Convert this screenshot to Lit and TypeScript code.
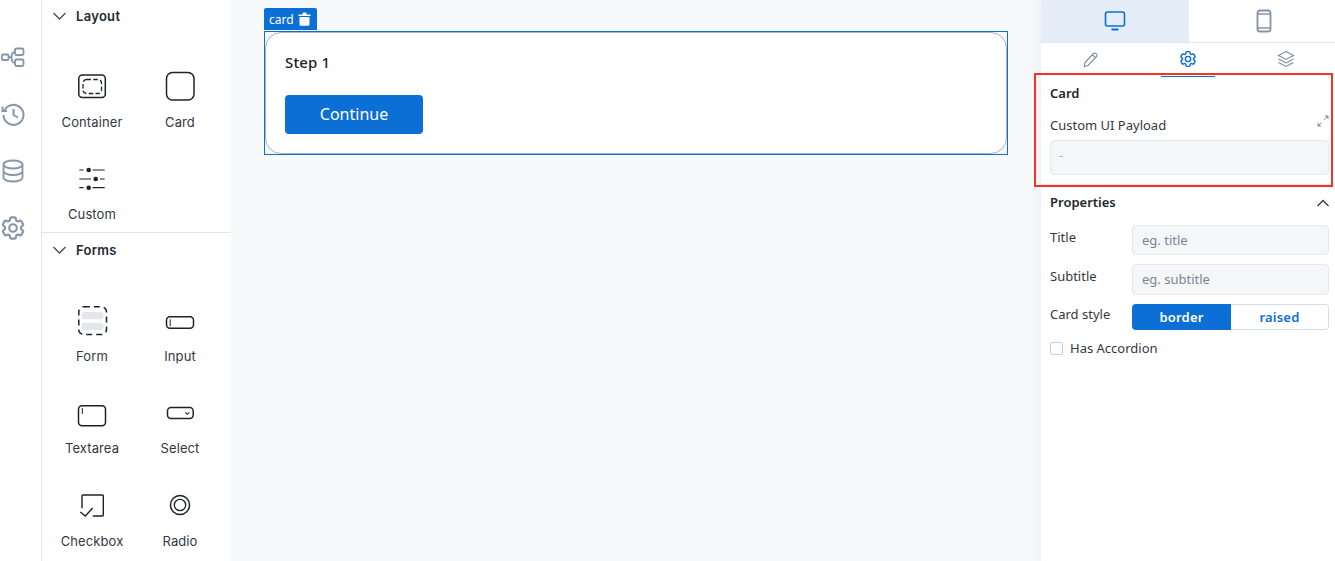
import { LitElement, html, css, svg } from "lit";
import { customElement } from "lit/decorators.js";

const GEAR = svg`<path d="M9.594 3.94c.09-.542.56-.94 1.11-.94h2.593c.55 0 1.02.398 1.11.94l.213 1.281c.063.374.313.686.645.87.074.04.147.083.22.127.324.196.72.257 1.075.124l1.217-.456a1.125 1.125 0 011.37.49l1.296 2.247a1.125 1.125 0 01-.26 1.431l-1.003.827c-.293.24-.438.613-.431.992a6.759 6.759 0 010 .255c-.007.378.138.75.43.99l1.005.828c.424.35.534.954.26 1.43l-1.298 2.247a1.125 1.125 0 01-1.369.491l-1.217-.456c-.355-.133-.75-.072-1.076.124a6.57 6.57 0 01-.22.128c-.331.183-.581.495-.644.869l-.213 1.28c-.09.543-.56.941-1.11.941h-2.594c-.55 0-1.02-.398-1.11-.94l-.213-1.281c-.062-.374-.312-.686-.644-.87a6.52 6.52 0 01-.22-.127c-.325-.196-.72-.257-1.076-.124l-1.217.456a1.125 1.125 0 01-1.369-.49l-1.297-2.247a1.125 1.125 0 01.26-1.431l1.004-.827c.292-.24.437-.613.43-.992a6.932 6.932 0 010-.255c.007-.378-.138-.75-.43-.99l-1.004-.828a1.125 1.125 0 01-.26-1.43l1.297-2.247a1.125 1.125 0 011.37-.491l1.216.456c.356.133.751.072 1.076-.124.072-.044.146-.087.22-.128.332-.183.582-.495.644-.869l.214-1.281z"/><circle cx="12" cy="12" r="3.200"/>`;

const INK = "#1f2328";
const ICONS: Record<string, unknown> = {
  Container: svg`<rect x="2.800" y="5" width="26.500" height="22.500" rx="3.500" fill="none" stroke="${INK}" stroke-width="1.500"/><rect x="7" y="9.500" width="18.500" height="14" rx="3.500" fill="none" stroke="${INK}" stroke-width="1.300" stroke-dasharray="4.500 2.300"/>`,
  Card: svg`<rect x="2.500" y="2.500" width="27.500" height="27.500" rx="6" fill="none" stroke="${INK}" stroke-width="1.500"/>`,
  Custom: svg`<g stroke="${INK}" stroke-width="1.200" fill="none"><path d="M3.300 8h4.200M16.500 8h12.200M3.300 17H15M24 17h4.700M3.300 25.700h4.200M16.500 25.700h12.200"/></g><g fill="${INK}"><circle cx="12.700" cy="8" r="2.300"/><circle cx="19.700" cy="17" r="2.300"/><circle cx="12.700" cy="25.700" r="2.300"/></g>`,
  Form: svg`<rect x="2.800" y="2.800" width="27.700" height="27.700" rx="5" fill="none" stroke="${INK}" stroke-width="1.500" stroke-dasharray="6 4"/><rect x="5.500" y="8" width="22" height="7.300" rx="3" fill="#e3e7ec"/><rect x="5.500" y="18.700" width="22" height="7.300" rx="3" fill="#e3e7ec"/>`,
  Input: svg`<rect x="2.500" y="12.800" width="27" height="11.500" rx="3.500" fill="none" stroke="${INK}" stroke-width="1.500"/><path d="M6.200 15.300v7" stroke="${INK}" stroke-width="1"/>`,
  Textarea: svg`<rect x="2.500" y="9.800" width="27" height="20" rx="3.500" fill="none" stroke="${INK}" stroke-width="1.500"/><path d="M6.300 12v6" stroke="${INK}" stroke-width="1"/>`,
  Select: svg`<rect x="3.500" y="11.500" width="25.700" height="11" rx="3.500" fill="none" stroke="${INK}" stroke-width="1.500"/><path d="M21.300 16.300l2 2 2-2" fill="none" stroke="${INK}" stroke-width="1.100"/>`,
  Checkbox: svg`<path d="M6 20.300V7.800a.8.8 0 0 1 .8-.8h19.700a.8.8 0 0 1 .8.800v19.400a.8.8 0 0 1-.8.800H16.700" fill="none" stroke="${INK}" stroke-width="1.400"/><path d="M4.300 24l5 4 7.400-8" fill="none" stroke="${INK}" stroke-width="1.400"/>`,
  Radio: svg`<circle cx="16" cy="17" r="9.500" fill="none" stroke="${INK}" stroke-width="1.500"/><circle cx="16" cy="17" r="5.700" fill="none" stroke="${INK}" stroke-width="1.300"/>`,
};

@customElement("app-root")
export class AppRoot extends LitElement {
  static styles = css`
    :host {
      display: block;
      width: 1335px;
      height: 561px;
      overflow: hidden;
      position: relative;
      font-family: "Noto Sans", sans-serif;
      color: #1f2328;
      background: #fff;
    }
    .page { display: flex; height: 561px; }

    .rail {
      width: 41px;
      flex: none;
      border-right: 1px solid #e3e6ea;
      display: flex;
      flex-direction: column;
      padding-top: 44px;
    }
    .rail svg { display: block; width: 26px; height: 26px; margin-bottom: 31px; fill: none; stroke: #8596ab; stroke-width: 1.800; }

    .palette { width: 189px; flex: none; font-family: Inter, sans-serif; overflow: hidden; }
    .sec-first { border-bottom: 1px solid #e3e6ea; height: 232px; }
    .sec-second { padding-top: 1px; }
    .sec-head {
      height: 32px;
      display: flex;
      align-items: center;
      padding-left: 11px;
      gap: 9px;
      font-size: 13px;
      font-weight: 600;
      letter-spacing: 0.3px;
      color: #262a30;
    }
    .sec-head svg { width: 14px; height: 14px; fill: none; stroke: #454c56; stroke-width: 1.300; }
    .grid {
      display: grid;
      grid-template-columns: 88px 88px;
      padding: 8px 0 0 6px;
      grid-auto-rows: 92px;
    }
    .item { display: flex; flex-direction: column; align-items: center; padding-top: 30px; box-sizing: border-box; }
    .item svg { width: 32px; height: 32px; display: block; }
    .item span { margin-top: 11px; font-size: 13px; line-height: 18px; color: #33383f; letter-spacing: 0.1px; }
    .item:nth-child(n + 5) span { margin-top: 12px; }
    .sec-first .item:nth-child(n + 5) span { margin-top: 11px; }

    .canvas {
      flex: 1;
      background: #f7f8fa;
      padding: 8px 0 0 33px;
      min-width: 0;
    }
    .tag {
      width: 53px;
      height: 22px;
      background: #0b6fd6;
      border-radius: 2px 2px 0 0;
      color: #fff;
      font-size: 12px;
      display: flex;
      align-items: center;
      gap: 4px;
      padding-left: 5px;
      box-sizing: border-box;
      margin-bottom: 1px;
    }
    .tag svg { width: 13px; height: 14px; fill: #fff; }
    .select { width: 744px; height: 124px; box-sizing: border-box; border: 1px solid #0b6fd6; }
    .card {
      height: 100%;
      box-sizing: border-box;
      border: 1px solid #a9b3c5;
      border-radius: 16px;
      background: #fff;
      padding: 18px 19px;
    }
    .card h3 { margin: 0; font-size: 15px; line-height: 22px; font-weight: 500; letter-spacing: 0.15px; color: #1c1f23; }
    .btn {
      margin-top: 22px;
      width: 138px;
      height: 39px;
      box-sizing: border-box;
      padding-bottom: 1px;
      border-radius: 4px;
      background: #0b6fd6;
      color: #fff;
      display: flex;
      align-items: center;
      justify-content: center;
      font-size: 16px;
    }

    .panel {
      width: 294px;
      flex: none;
      background: #fff;
      box-shadow: -4px 0 8px rgba(30, 40, 60, 0.03);
      position: relative;
    }
    .devices { display: grid; grid-template-columns: 148px 146px; height: 42px; border-bottom: 1px solid #e6e8ec; }
    .devices div { display: flex; align-items: center; justify-content: center; }
    .devices .on { background: #e5edf8; }
    .devices svg { width: 24px; height: 24px; fill: none; stroke-width: 1.600; }
    .devices .on svg { stroke: #0b6fd6; }
    .devices .off { padding-left: 4px; }
    .devices .off svg { stroke: #8593a5; }
    .tabs { display: grid; grid-template-columns: repeat(3, 98px); height: 33px; position: relative; }
    .tabs div { display: flex; align-items: center; justify-content: center; position: relative; padding-bottom: 1px; box-sizing: border-box; }
    .tabs svg { width: 18px; height: 18px; fill: none; stroke: #7f8a99; stroke-width: 1.100; }
    .tabs .on svg { stroke: #0b6fd6; stroke-width: 1.800; }
    .tabs .on::after {
      content: "";
      position: absolute;
      left: 22px;
      bottom: -1px;
      width: 54px;
      height: 1px;
      background: #0b6fd6;
    }
    .block { padding: 8px 6px 9px 9px; border-bottom: 1px solid #e6e8ec; }
    .title { font-size: 13px; font-weight: 600; line-height: 18px; color: #22262b; }
    .label-row { display: flex; justify-content: space-between; align-items: center; margin-top: 14px; height: 18px; }
    .label { font-size: 13px; color: #33383f; line-height: 18px; }
    .label-row svg { width: 12px; height: 12px; fill: #8a94a2; stroke: #8a94a2; stroke-width: 1; margin-top: -8px; }
    .area {
      margin-top: 6px;
      height: 35px;
      box-sizing: border-box;
      background: #f5f6f8;
      border: 1px solid #e6e8ec;
      border-radius: 4px;
      font-size: 12px;
      color: #a2aab5;
      padding: 6px 8px;
    }
    .props { padding: 0 6px 0 9px; }
    .props-head { display: flex; justify-content: space-between; align-items: center; height: 17px; margin-top: 8px; }
    .props-head svg { width: 14px; height: 14px; fill: none; stroke: #333a44; stroke-width: 1.300; }
    .row { display: grid; grid-template-columns: 82px 197px; }
    .row .label { padding-top: 3px; }
    .inp {
      box-sizing: border-box;
      background: #f5f6f8;
      border: 1px solid #e6e8ec;
      border-radius: 4px;
      font-size: 13px;
      color: #7a8594;
      padding: 0 0 1px 9px;
      display: flex;
      align-items: center;
    }
    .r1 { margin-top: 15px; }
    .r1 .inp { height: 30px; }
    .r2 { margin-top: 9px; }
    .r2 .inp { height: 31px; }
    .r3 { margin-top: 9px; }
    .r3 .label { padding-top: 1px; }
    .toggle {
      display: grid;
      grid-template-columns: 99px 98px;
      height: 26px;
      font-size: 13px;
      font-weight: 600;
      letter-spacing: 0.2px;
    }
    .toggle div { display: flex; align-items: center; justify-content: center; box-sizing: border-box; padding-bottom: 1px; }
    .toggle .a { background: #0b6fd6; color: #fff; border-radius: 4px 0 0 4px; }
    .toggle .b { color: #0b6fd6; border: 1px solid #d7dce3; border-left: none; border-radius: 0 4px 4px 0; }
    .check { display: flex; align-items: center; gap: 7px; margin-top: 9px; height: 18px; }
    .box { width: 13px; height: 13px; box-sizing: border-box; border: 1px solid #c9ced6; border-radius: 2px; background: #fff; }

    .highlight {
      position: absolute;
      left: 1034px;
      top: 73px;
      width: 299px;
      height: 114px;
      box-sizing: border-box;
      border: 2px solid #f5341f;
      pointer-events: none;
    }
  `;

  private item(name: string) {
    return html`<div class="item"><svg viewBox="0 0 32 32">${ICONS[name]}</svg><span>${name}</span></div>`;
  }

  private head(name: string) {
    return html`<div class="sec-head"><svg viewBox="0 0 14 14"><path d="M.5 4l6 6 6-6"/></svg>${name}</div>`;
  }

  render() {
    return html`
      <div class="page">
        <nav class="rail">
          <svg viewBox="0 0 26 26"><rect x="2" y="10.500" width="6.500" height="5.500" rx="1"/><rect x="15" y="4.500" width="8.500" height="6.500" rx="1.400"/><rect x="15" y="15.500" width="8.500" height="6.500" rx="1.400"/><path d="M8.500 13.200h3M15 7.800c-3 0-3.500 2-3.500 5.400s.5 5.600 3.500 5.600"/></svg>
          <svg viewBox="0 0 26 26"><path d="M4.500 9.500A10 10 0 1 1 3.500 14" stroke-width="2"/><path d="M2.500 5.500v4.500h4.500M13.500 8v6l4.500 2.500" stroke-width="2"/></svg>
          <svg viewBox="0 0 26 26"><ellipse cx="13" cy="6.500" rx="9.500" ry="4"/><path d="M3.500 6.500v13c0 2.200 4.300 4 9.500 4s9.500-1.800 9.500-4v-13M3.500 13c0 2.200 4.300 4 9.500 4s9.500-1.800 9.500-4"/></svg>
          <svg viewBox="1 1 22 22" stroke-width="1.400">${GEAR}</svg>
        </nav>
        <aside class="palette">
          <section class="sec-first">
            ${this.head("Layout")}
            <div class="grid">${["Container", "Card", "Custom"].map((n) => this.item(n))}</div>
          </section>
          <section class="sec-second">
            ${this.head("Forms")}
            <div class="grid">${["Form", "Input", "Textarea", "Select", "Checkbox", "Radio"].map((n) => this.item(n))}</div>
          </section>
        </aside>
        <main class="canvas">
          <div class="tag">card
            <svg viewBox="0 0 13 14"><path d="M4.500 1.500a1 1 0 0 1 1-1h2a1 1 0 0 1 1 1V2.500h4v1.500H.5V2.500h4zM1.500 5h10v7.500a1.200 1.200 0 0 1-1.200 1.200H2.700a1.200 1.200 0 0 1-1.200-1.200z"/></svg>
          </div>
          <div class="select">
            <div class="card">
              <h3>Step 1</h3>
              <div class="btn">Continue</div>
            </div>
          </div>
        </main>
        <aside class="panel">
          <div class="devices">
            <div class="on"><svg viewBox="0 0 24 24"><rect x="2.500" y="3" width="19" height="14" rx="2"/><path d="M8.500 20.500h7" stroke-width="2"/></svg></div>
            <div class="off"><svg viewBox="0 0 24 24"><rect x="5.500" y="1.500" width="13" height="21" rx="2.500" stroke-width="1.800"/><path d="M5.500 5h13M5.500 19h13"/></svg></div>
          </div>
          <div class="tabs">
            <div><svg viewBox="-1 0 18 18"><path d="M3 12.500L11.500 3.500a1.600 1.600 0 0 1 2.300 0l.7.7a1.600 1.600 0 0 1 0 2.300L6 15.500l-3.800 1z M10.500 4.800l3 3"/></svg></div>
            <div class="on"><svg viewBox="1 1 22 22">${GEAR}</svg></div>
            <div><svg viewBox="0 0 18 18"><path d="M9 1.500l7.500 4L9 9.500l-7.500-4zM1.500 9L9 13l7.500-4M1.500 12.500L9 16.500l7.500-4"/></svg></div>
          </div>
          <div class="block">
            <div class="title">Card</div>
            <div class="label-row">
              <span class="label">Custom UI Payload</span>
              <svg viewBox="0 0 12 12"><path d="M7 5l3-3M4.500 7.500l-3 3" fill="none"/><path d="M7.500 .5h4v4zM.5 7.500v4h4z" stroke="none"/></svg>
            </div>
            <div class="area">-</div>
          </div>
          <div class="props">
            <div class="props-head">
              <span class="title">Properties</span>
              <svg viewBox="0 0 14 14"><path d="M2.500 11L8 5.500 13.500 11"/></svg>
            </div>
            <div class="row r1"><span class="label">Title</span><div class="inp">eg. title</div></div>
            <div class="row r2"><span class="label">Subtitle</span><div class="inp">eg. subtitle</div></div>
            <div class="row r3"><span class="label">Card style</span>
              <div class="toggle"><div class="a">border</div><div class="b">raised</div></div>
            </div>
            <div class="check"><span class="box"></span><span class="label">Has Accordion</span></div>
          </div>
        </aside>
      </div>
      <div class="highlight"></div>
    `;
  }
}
